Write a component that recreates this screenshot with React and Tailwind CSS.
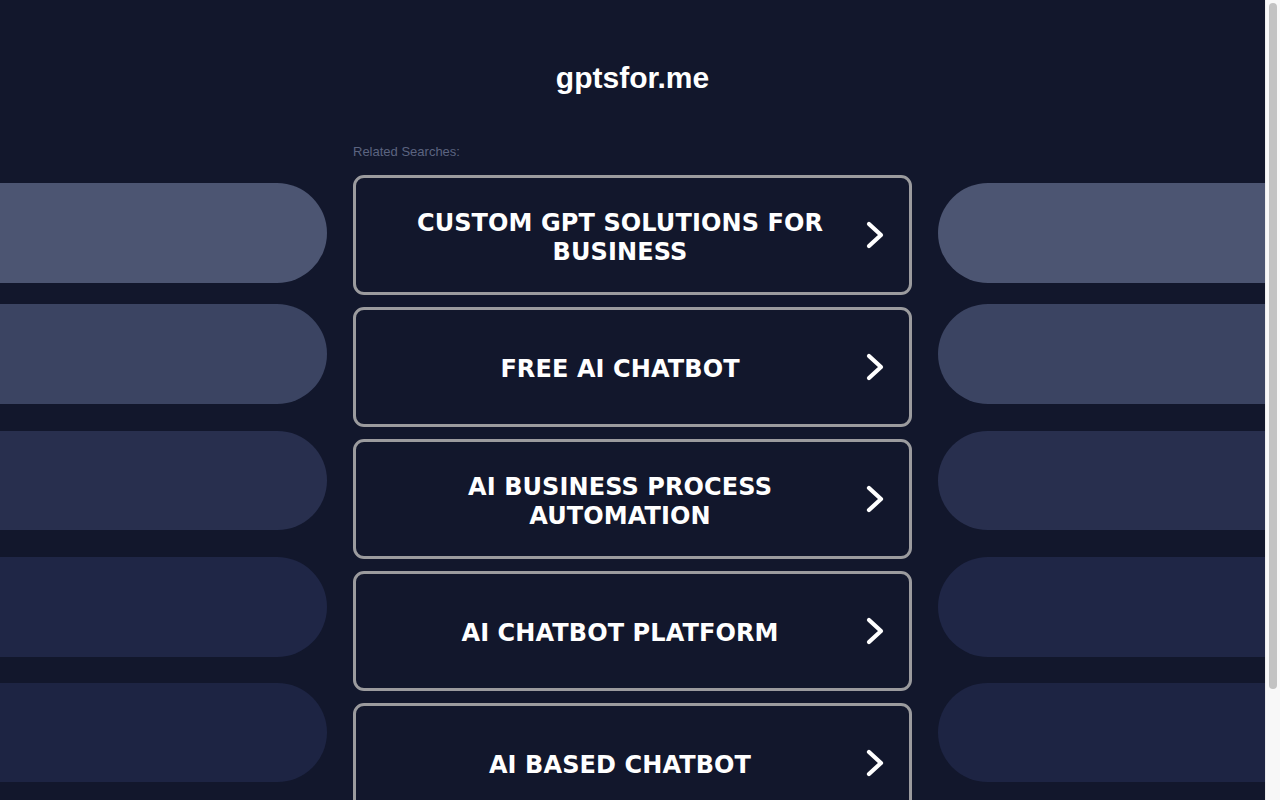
import React from "react";

const items = [
  "CUSTOM GPT SOLUTIONS FOR BUSINESS",
  "FREE AI CHATBOT",
  "AI BUSINESS PROCESS AUTOMATION",
  "AI CHATBOT PLATFORM",
  "AI BASED CHATBOT",
];

const leftPills = [
  "bg-[#4c5572] mt-0 h-[100px]",
  "bg-[#3b4462] mt-[21px] h-[100px]",
  "bg-[#282f4e] mt-[27px] h-[99px]",
  "bg-[#1f2646] mt-[27px] h-[100px]",
  "bg-[#1d2443] mt-[26px] h-[99px]",
];

function Chevron() {
  return (
    <svg width="18" height="28" viewBox="0 0 18 28" className="shrink-0">
      <polyline
        points="3,3 15,14 3,25"
        fill="none"
        stroke="#ffffff"
        strokeWidth="4.2"
        strokeLinecap="round"
        strokeLinejoin="round"
      />
    </svg>
  );
}

export default function App() {
  return (
    <div className="flex h-screen w-full overflow-hidden bg-[#12172c]">
      <div className="flex-1 flex flex-col">
        <div className="h-[140px] shrink-0 pt-[63px] text-center">
          <h1
            className="text-[30px] leading-none font-bold text-white"
            style={{ fontFamily: '"Liberation Sans", Arial, sans-serif' }}
          >
            gptsfor.me
          </h1>
        </div>
        <div className="grid shrink-0 grid-cols-[327px_559px_327px] gap-x-[26px]">
          <div className="flex flex-col pt-[43px]">
            {leftPills.map((c, i) => (
              <div key={i} className={`${c} shrink-0 rounded-r-full`} />
            ))}
          </div>
          <div className="flex flex-col">
            <div
              className="pt-[4px] text-[13px] leading-[16px] text-[#5c6480]"
              style={{ fontFamily: '"Liberation Sans", Arial, sans-serif' }}
            >
              Related Searches:
            </div>
            <div className="mt-[15px] flex flex-col gap-[12px]">
              {items.map((t) => (
                <div
                  key={t}
                  className="h-[120px] shrink-0 rounded-[11px] border-[3px] border-[#9b9b9e] flex items-center pl-[23px] pr-[25px] gap-[5px]"
                >
                  <div
                    className="flex-1 pt-[5px] text-center text-white font-bold text-[24px] leading-[29px] tracking-[0.1px]"
                    style={{ fontFamily: '"DejaVu Sans", Verdana, sans-serif' }}
                  >
                    {t}
                  </div>
                  <Chevron />
                </div>
              ))}
            </div>
          </div>
          <div className="flex flex-col pt-[43px]">
            {leftPills.map((c, i) => (
              <div key={i} className={`${c} shrink-0 rounded-l-full`} />
            ))}
          </div>
        </div>
      </div>
      <div className="w-[15px] shrink-0 bg-[#f8f8f8] border-l border-[#ededed] pt-[3px] flex justify-center">
        <div className="w-[8px] h-[686px] rounded-full bg-[#c2c2c2]" />
      </div>
    </div>
  );
}
